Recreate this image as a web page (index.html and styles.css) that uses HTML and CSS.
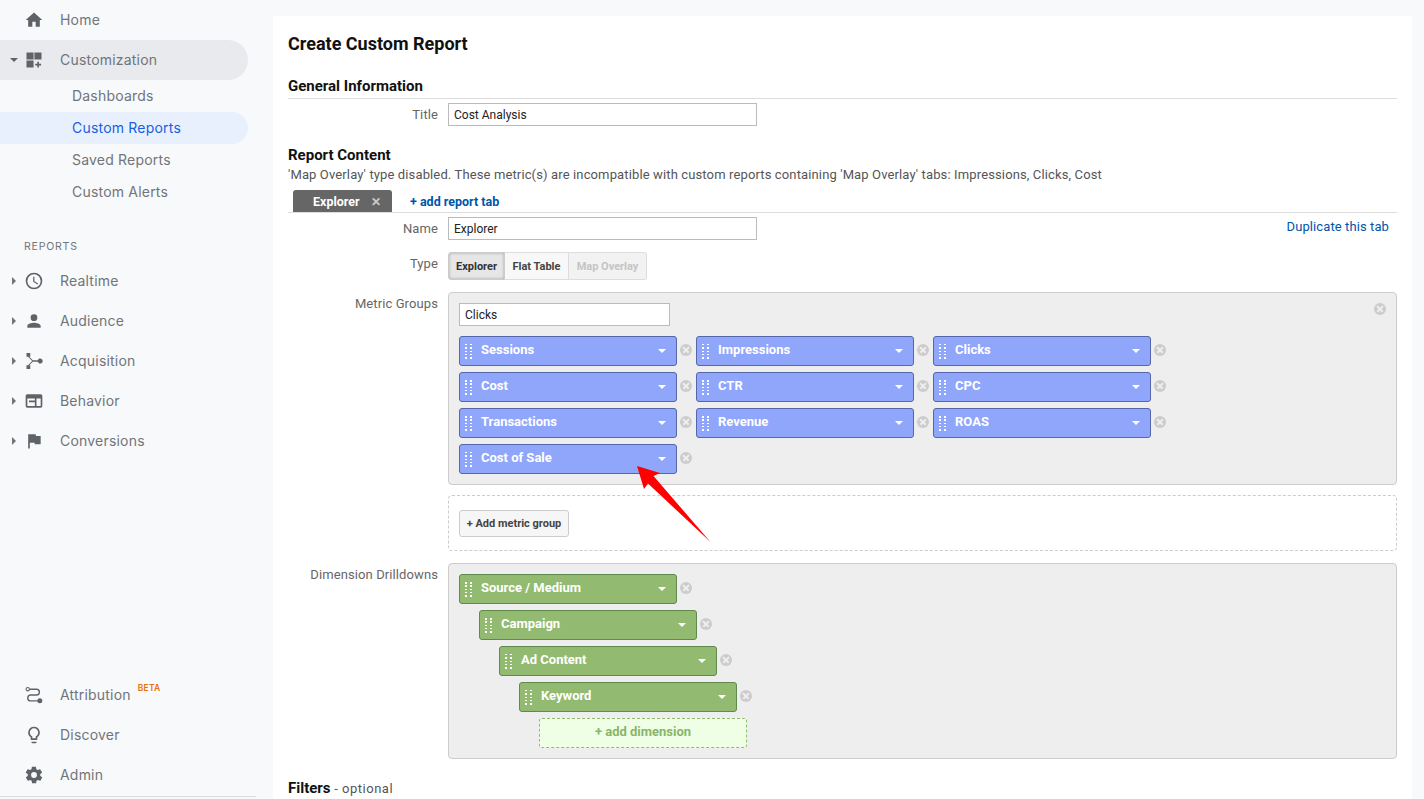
FILE: index.html
```html
<!DOCTYPE html>
<html lang="en">

<head>
    <meta charset="UTF-8" />
    <title>Create Custom Report</title>
    <link rel="stylesheet" href="styles.css">
</head>

<body>
    <!-- Side navigation -->
    <nav class="sidebar">
        <div class="nav-top">
            <a class="nav-item">
                <span class="caret"></span>
                <svg class="nav-icon" viewBox="0 0 24 24"><path d="M10 20v-6h4v6h5v-8h3L12 3 2 12h3v8z"/></svg>
                Home
            </a>
            <a class="nav-item nav-open">
                <span class="caret caret-down"></span>
                <svg class="nav-icon" viewBox="0 0 24 24"><path d="M3 3h8.500v8.500H3zM12.500 3H21v8.500h-8.500zM3 12.500h8.500V21H3zM16 14h2v2.500h2.500v2H18V21h-2v-2.500h-2.500v-2H16z"/></svg>
                Customization
            </a>
            <a class="sub-item">Dashboards</a>
            <a class="sub-item sub-active">Custom Reports</a>
            <a class="sub-item">Saved Reports</a>
            <a class="sub-item">Custom Alerts</a>

            <div class="nav-heading">REPORTS</div>

            <a class="nav-item">
                <span class="caret caret-right"></span>
                <svg class="nav-icon" viewBox="0 0 24 24"><path d="M12 2a10 10 0 1 0 0 20 10 10 0 0 0 0-20zm0 18a8 8 0 1 1 0-16 8 8 0 0 1 0 16zm.5-13H11v6l5.200 3.200.8-1.300-4.500-2.700z"/></svg>
                Realtime
            </a>
            <a class="nav-item">
                <span class="caret caret-right"></span>
                <svg class="nav-icon" viewBox="0 0 24 24"><path d="M12 12a4 4 0 1 0 0-8 4 4 0 0 0 0 8zm0 2c-2.700 0-8 1.300-8 4v2h16v-2c0-2.700-5.300-4-8-4z"/></svg>
                Audience
            </a>
            <a class="nav-item">
                <span class="caret caret-right"></span>
                <svg class="nav-icon" viewBox="0 0 24 24"><path d="M3 2.500h4.500V7H6.300l4.200 4h6.100a3 3 0 1 1 0 2h-6.100l-4.200 4h1.200v4.500H3V17h1.800l5-5-5-5H3z"/></svg>
                Acquisition
            </a>
            <a class="nav-item">
                <span class="caret caret-right"></span>
                <svg class="nav-icon" viewBox="0 0 24 24"><path d="M4 4h16a2 2 0 0 1 2 2v12a2 2 0 0 1-2 2H4a2 2 0 0 1-2-2V6a2 2 0 0 1 2-2zm0 5v9h9v-4.500H6v-2h7V9zm11 0v9h5V9z"/></svg>
                Behavior
            </a>
            <a class="nav-item">
                <span class="caret caret-right"></span>
                <svg class="nav-icon" viewBox="0 0 24 24"><path d="M14.400 6L14 4H5v17h2v-7h5.600l.4 2h7V6z"/></svg>
                Conversions
            </a>
        </div>

        <div class="nav-bottom">
            <a class="nav-item">
                <span class="caret"></span>
                <svg class="nav-icon" viewBox="0 0 24 24"><path class="icon-line" d="M6.500 5H15a3 3 0 0 1 0 7H8a3 3 0 0 0 0 7h9"/><circle cx="4.500" cy="5" r="2" class="icon-ring"/><circle cx="19" cy="19" r="3"/></svg>
                <span>Attribution</span><sup class="beta">BETA</sup>
            </a>
            <a class="nav-item">
                <span class="caret"></span>
                <svg class="nav-icon" viewBox="0 0 24 24"><path d="M9 21c0 .600.400 1 1 1h4c.600 0 1-.400 1-1v-1H9zm3-19a7 7 0 0 0-4 12.700V17c0 .600.400 1 1 1h6c.600 0 1-.400 1-1v-2.300A7 7 0 0 0 12 2zm2.900 11.100l-.900.600V16h-4v-2.300l-.900-.600a5 5 0 1 1 5.800 0z"/></svg>
                Discover
            </a>
            <a class="nav-item">
                <span class="caret"></span>
                <svg class="nav-icon" viewBox="0 0 24 24"><path d="M19.400 13c.100-.300.100-.700.100-1s0-.700-.100-1l2.100-1.600c.200-.200.200-.400.100-.600l-2-3.500c-.100-.200-.400-.300-.600-.200l-2.500 1c-.500-.400-1.100-.700-1.700-1l-.4-2.600c0-.300-.200-.500-.500-.500h-4c-.300 0-.500.200-.500.400l-.4 2.700c-.600.200-1.100.600-1.700 1l-2.500-1c-.200-.100-.500 0-.6.200l-2 3.500c-.100.200-.100.500.100.600L4.600 11c0 .300-.100.700-.100 1s0 .700.100 1l-2.100 1.600c-.200.200-.200.400-.100.600l2 3.500c.100.200.400.300.600.200l2.500-1c.500.400 1.100.700 1.700 1l.4 2.600c0 .300.200.500.500.500h4c.300 0 .500-.200.500-.400l.4-2.700c.600-.200 1.100-.600 1.700-1l2.500 1c.200.100.500 0 .6-.200l2-3.500c.100-.200.100-.500-.100-.600zM12 15.500a3.500 3.500 0 1 1 0-7 3.500 3.500 0 0 1 0 7z"/></svg>
                Admin
            </a>
            <div class="nav-rule"></div>
        </div>
    </nav>

    <!-- Report editor -->
    <main class="panel">
        <h1>Create Custom Report</h1>

        <h2 class="section-title ruled">General Information</h2>
        <div class="form-row title-row">
            <label>Title</label>
            <input class="text-input" type="text" value="Cost Analysis" />
        </div>

        <h2 class="section-title content-title">Report Content</h2>
        <p class="note">'Map Overlay' type disabled. These metric(s) are incompatible with custom reports containing 'Map Overlay' tabs: Impressions, Clicks, Cost</p>

        <div class="tab-bar">
            <div class="tab">Explorer <span class="tab-close">&#10005;</span></div>
            <a class="add-tab">+ add report tab</a>
        </div>

        <div class="form-row name-row">
            <label>Name</label>
            <input class="text-input" type="text" value="Explorer" />
            <a class="duplicate">Duplicate this tab</a>
        </div>

        <div class="form-row type-row">
            <label>Type</label>
            <div class="type-buttons">
                <button class="type-btn type-selected">Explorer</button>
                <button class="type-btn">Flat Table</button>
                <button class="type-btn type-disabled">Map Overlay</button>
            </div>
        </div>

        <div class="form-row">
            <label class="box-label">Metric Groups</label>
            <div class="box-column">
                <div class="box">
                    <span class="remove box-remove"></span>
                    <input class="group-input" type="text" value="Clicks" />
                    <div class="chip-grid">
                        <div class="chip-wrap"><div class="chip metric"><span class="grip"></span>Sessions<span class="chip-arrow"></span></div><span class="remove"></span></div>
                        <div class="chip-wrap"><div class="chip metric"><span class="grip"></span>Impressions<span class="chip-arrow"></span></div><span class="remove"></span></div>
                        <div class="chip-wrap"><div class="chip metric"><span class="grip"></span>Clicks<span class="chip-arrow"></span></div><span class="remove"></span></div>
                        <div class="chip-wrap"><div class="chip metric"><span class="grip"></span>Cost<span class="chip-arrow"></span></div><span class="remove"></span></div>
                        <div class="chip-wrap"><div class="chip metric"><span class="grip"></span>CTR<span class="chip-arrow"></span></div><span class="remove"></span></div>
                        <div class="chip-wrap"><div class="chip metric"><span class="grip"></span>CPC<span class="chip-arrow"></span></div><span class="remove"></span></div>
                        <div class="chip-wrap"><div class="chip metric"><span class="grip"></span>Transactions<span class="chip-arrow"></span></div><span class="remove"></span></div>
                        <div class="chip-wrap"><div class="chip metric"><span class="grip"></span>Revenue<span class="chip-arrow"></span></div><span class="remove"></span></div>
                        <div class="chip-wrap"><div class="chip metric"><span class="grip"></span>ROAS<span class="chip-arrow"></span></div><span class="remove"></span></div>
                        <div class="chip-wrap"><div class="chip metric"><span class="grip"></span>Cost of Sale<span class="chip-arrow"></span></div><span class="remove"></span></div>
                    </div>
                </div>
                <div class="add-group">
                    <button class="add-group-btn">+ Add metric group</button>
                </div>
            </div>
        </div>

        <div class="form-row drill-row">
            <label class="box-label">Dimension Drilldowns</label>
            <div class="box drill-box">
                <div class="chip-wrap"><div class="chip dimension"><span class="grip"></span>Source / Medium<span class="chip-arrow"></span></div><span class="remove"></span></div>
                <div class="chip-wrap indent-1"><div class="chip dimension"><span class="grip"></span>Campaign<span class="chip-arrow"></span></div><span class="remove"></span></div>
                <div class="chip-wrap indent-2"><div class="chip dimension"><span class="grip"></span>Ad Content<span class="chip-arrow"></span></div><span class="remove"></span></div>
                <div class="chip-wrap indent-3"><div class="chip dimension"><span class="grip"></span>Keyword<span class="chip-arrow"></span></div><span class="remove"></span></div>
                <div class="add-dimension">+ add dimension</div>
            </div>
        </div>

        <div class="filters"><strong>Filters</strong> - optional</div>
    </main>

    <!-- Red annotation arrow over the form -->
    <svg class="annotation" viewBox="0 0 90 90" width="90" height="90">
        <path d="M0 0 L23 7 L16.500 10 L73.500 76 L11 17.500 L7 23 Z"/>
    </svg>
</body>

</html>
```

FILE: styles.css
```css
:root {
    --page-bg: #f8f9fb;
    --nav-text: #5f6368;
    --rule: #dadce0;
    --label: #666;
    --link: #05a;
    --metric: #8fa6fa;
    --metric-border: #5566aa;
    --dimension: #92bb71;
    --dimension-border: #5f8a4c;
}

body {
    margin: 0;
    height: 799px;
    overflow: hidden;
    background: var(--page-bg);
    display: flex;
    font-family: "Roboto", "Liberation Sans", sans-serif;
    color: #222;
}

/* Side navigation */
.sidebar {
    width: 273px;
    flex: none;
    height: 799px;
    display: flex;
    flex-direction: column;
    justify-content: space-between;
    font-family: "Inter", "Noto Sans", sans-serif;
    font-size: 14px;
    letter-spacing: 0.2px;
    color: var(--nav-text);
}

.nav-item {
    display: flex;
    align-items: center;
    height: 40px;
    width: 248px;
    box-sizing: border-box;
    padding-left: 10px;
    padding-bottom: 2px;
    border-radius: 0 20px 20px 0;
    color: #70757a;
}

.nav-open {
    background: #e8eaed;
}

.caret {
    width: 8px;
    height: 8px;
    flex: none;
    margin: 2px 6px 0 0;
    position: relative;
}

.caret-down::after,
.caret-right::after {
    content: "";
    position: absolute;
    width: 0;
    height: 0;
    border-style: solid;
}

.caret-down::after {
    left: 0;
    top: 2px;
    border-width: 4px 4px 0 4px;
    border-color: #5f6368 transparent transparent transparent;
}

.caret-right::after {
    left: 2px;
    top: 0;
    border-width: 4px 0 4px 4px;
    border-color: transparent transparent transparent #70757a;
}

.nav-icon {
    width: 20px;
    height: 20px;
    flex: none;
    margin: 2px 16px 0 0;
    fill: #5f6368;
}

.icon-line {
    fill: none;
    stroke: #5f6368;
    stroke-width: 1.700;
}

.icon-ring {
    fill: none;
    stroke: #5f6368;
    stroke-width: 1.300;
}

.sub-item {
    display: flex;
    align-items: center;
    height: 32px;
    width: 248px;
    box-sizing: border-box;
    padding-left: 72px;
    padding-bottom: 2px;
    border-radius: 0 16px 16px 0;
    color: #70757a;
}

.sub-active {
    background: #e8f0fe;
    color: #1a5fd8;
}

.nav-heading {
    margin: 33px 0 0 24px;
    height: 20px;
    line-height: 12px;
    font-size: 10.500px;
    letter-spacing: 0.8px;
    color: #70757a;
}

.beta {
    align-self: flex-start;
    margin: 7px 0 0 7px;
    font-size: 8.500px;
    font-weight: 600;
    line-height: 12px;
    color: #e8710a;
}

.nav-bottom {
    padding-bottom: 2px;
}

.nav-rule {
    width: 256px;
    height: 1px;
    margin-top: 1px;
    background: var(--rule);
}

/* Report editor */
.panel {
    width: 1139px;
    flex: none;
    box-sizing: border-box;
    height: 783px;
    margin-top: 16px;
    padding: 18px 15px 0;
    background: #fff;
}

h1 {
    margin: 0;
    font-size: 18px;
    line-height: 20px;
    font-weight: 700;
    color: #111;
}

.section-title {
    margin: 0;
    font-size: 15px;
    line-height: 18px;
    font-weight: 700;
    color: #111;
}

.ruled {
    margin-top: 23px;
    padding-bottom: 3px;
    border-bottom: 1px solid #ddd;
}

.form-row {
    display: flex;
    align-items: flex-start;
    position: relative;
}

.form-row label {
    width: 150px;
    flex: none;
    margin-right: 10px;
    text-align: right;
    font-size: 13px;
    letter-spacing: 0.1px;
    line-height: 23px;
    color: var(--label);
}

.title-row {
    margin-top: 4px;
}

.text-input {
    width: 309px;
    height: 23px;
    box-sizing: border-box;
    padding: 0 5px;
    border: 1px solid #bbb;
    font-family: inherit;
    font-size: 12px;
    color: #222;
    background: #fff;
    outline: none;
}

.content-title {
    margin-top: 20px;
}

.note {
    margin: 3px 0 0;
    font-size: 13px;
    letter-spacing: 0.13px;
    line-height: 15px;
    color: #555;
}

.tab-bar {
    display: flex;
    align-items: flex-end;
    margin-top: 8px;
    height: 22px;
    border-bottom: 1px solid #ddd;
}

.tab {
    margin-left: 5px;
    width: 99px;
    height: 22px;
    box-sizing: border-box;
    padding-left: 20px;
    background: #666;
    border-radius: 3px 3px 0 0;
    color: #fff;
    font-size: 12.500px;
    font-weight: 700;
    line-height: 23px;
}

.tab-close {
    margin-left: 8px;
    font-size: 12px;
    font-weight: 700;
    color: #ccc;
}

.add-tab {
    margin-left: 18px;
    font-size: 12.500px;
    font-weight: 700;
    line-height: 23px;
    height: 22px;
    color: var(--link);
}

.name-row {
    margin-top: 4px;
}

.duplicate {
    margin-left: auto;
    margin-right: 8px;
    font-size: 13px;
    letter-spacing: 0.1px;
    line-height: 20px;
    color: var(--link);
}

.type-row {
    margin-top: 12px;
}

.type-row label {
    line-height: 24px;
}

.type-buttons {
    display: flex;
}

.type-btn {
    height: 28px;
    padding: 0;
    border: 1px solid #ddd;
    border-left: none;
    background: #f8f8f8;
    font-family: inherit;
    font-size: 11px;
    font-weight: 700;
    color: #444;
}

.type-selected {
    width: 57px;
    border: 1px solid #ccc;
    border-radius: 3px 0 0 3px;
    background: #e6e6e6;
    box-shadow: inset 0 0 3px rgba(0, 0, 0, 0.3);
    color: #333;
}

.type-btn:nth-child(2) {
    width: 64px;
}

.type-disabled {
    width: 78px;
    border-radius: 0 3px 3px 0;
    color: #c4c4c4;
    background: #f2f2f2;
}

.box-column {
    width: 949px;
}

.box {
    position: relative;
    box-sizing: border-box;
    width: 949px;
    padding: 10px;
    background: #eee;
    border: 1px solid #ccc;
    border-radius: 4px;
}

.type-row + .form-row {
    margin-top: 12px;
}

.group-input {
    display: block;
    width: 211px;
    height: 23px;
    box-sizing: border-box;
    padding: 0 5px;
    border: 1px solid #bbb;
    font-family: inherit;
    font-size: 12px;
    color: #222;
    outline: none;
}

.chip-grid {
    display: grid;
    grid-template-columns: repeat(3, 237px);
    row-gap: 6px;
    margin-top: 10px;
}

.chip-wrap {
    display: flex;
    align-items: center;
}

.chip {
    position: relative;
    width: 218px;
    height: 30px;
    box-sizing: border-box;
    padding-left: 21px;
    border-radius: 3px;
    color: #fff;
    font-size: 13px;
    font-weight: 700;
    line-height: 26px;
}

.metric {
    background: var(--metric);
    border: 1px solid var(--metric-border);
}

.dimension {
    background: var(--dimension);
    border: 1px solid var(--dimension-border);
}

.grip {
    position: absolute;
    left: 5px;
    top: 7px;
    width: 7px;
    height: 15px;
}

.grip::before,
.grip::after {
    content: "";
    position: absolute;
    top: 0;
    width: 2px;
    height: 15px;
    background: repeating-linear-gradient(to bottom, #fff 0 1.500px, transparent 1.500px 3.300px);
}

.grip::before {
    left: 0;
}

.grip::after {
    left: 5px;
}

.chip-arrow {
    position: absolute;
    right: 10px;
    top: 12px;
    width: 0;
    height: 0;
    border-style: solid;
    border-width: 4px 4px 0 4px;
    border-color: #fff transparent transparent transparent;
}

.remove {
    position: relative;
    display: block;
    flex: none;
    width: 12px;
    height: 12px;
    margin: 0 0 2px 3px;
    border-radius: 50%;
    background: #ccc;
}

.remove::before,
.remove::after {
    content: "";
    position: absolute;
    left: 2px;
    top: 5.250px;
    width: 8px;
    height: 1.500px;
    background: #eee;
    transform: rotate(45deg);
}

.remove::after {
    transform: rotate(-45deg);
}

.box-remove {
    position: absolute;
    right: 10px;
    top: 10px;
    margin: 0;
}

.add-group {
    box-sizing: border-box;
    margin-top: 10px;
    height: 56px;
    padding: 14px 10px;
    border: 1px dashed #ccc;
    border-radius: 4px;
}

.add-group-btn {
    height: 27px;
    width: 110px;
    padding: 0;
    border: 1px solid #ccc;
    border-radius: 3px;
    background: #f6f6f6;
    font-family: inherit;
    font-size: 11px;
    font-weight: 700;
    color: #444;
}

.drill-row {
    margin-top: 12px;
}

.drill-box {
    display: flex;
    flex-direction: column;
    gap: 6px;
    height: 196px;
}

.indent-1 {
    margin-left: 20px;
}

.indent-2 {
    margin-left: 40px;
}

.indent-3 {
    margin-left: 60px;
}

.add-dimension {
    width: 208px;
    height: 30px;
    margin-left: 80px;
    box-sizing: border-box;
    border: 1px dashed #92bb71;
    border-radius: 3px;
    background: #efffe6;
    color: #8ab56a;
    font-size: 13px;
    font-weight: 700;
    line-height: 26px;
    text-align: center;
}

.filters {
    margin-top: 20px;
    font-size: 13px;
    letter-spacing: 0.5px;
    line-height: 18px;
    color: #555;
}

.filters strong {
    font-size: 15px;
    letter-spacing: 0;
    color: #111;
}

/* Annotation */
.annotation {
    position: absolute;
    left: 637px;
    top: 466px;
    fill: #f00;
}
```
